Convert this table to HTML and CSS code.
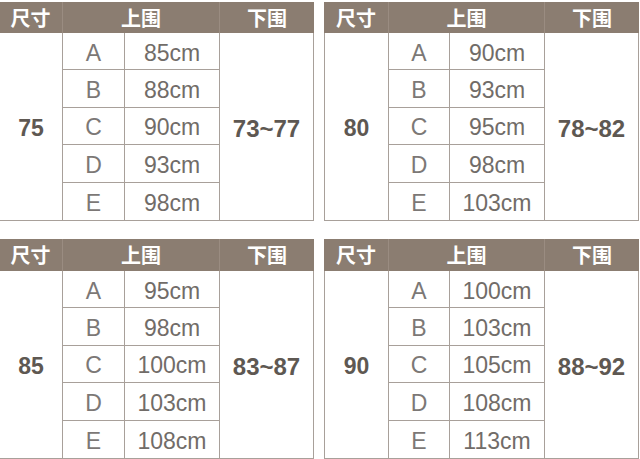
FILE: index.html
```html
<!DOCTYPE html>
<html lang="zh">
<head>
<meta charset="utf-8">
<title>尺码表</title>
<link rel="stylesheet" href="styles.css">
</head>
<body>
<div class="sheet">
  <div class="panel">
    <div class="h h1">尺寸</div><div class="h h2">上围</div><div class="h h3">下围</div>
    <div class="size">75</div>
    <div class="cup r1">A</div><div class="val r1">85cm</div>
    <div class="cup r2">B</div><div class="val r2">88cm</div>
    <div class="cup r3">C</div><div class="val r3">90cm</div>
    <div class="cup r4">D</div><div class="val r4">93cm</div>
    <div class="cup r5 last">E</div><div class="val r5 last">98cm</div>
    <div class="range">73~77</div>
  </div>
  <div class="panel alt">
    <div class="h h1">尺寸</div><div class="h h2">上围</div><div class="h h3">下围</div>
    <div class="size">80</div>
    <div class="cup r1">A</div><div class="val r1">90cm</div>
    <div class="cup r2">B</div><div class="val r2">93cm</div>
    <div class="cup r3">C</div><div class="val r3">95cm</div>
    <div class="cup r4">D</div><div class="val r4">98cm</div>
    <div class="cup r5 last">E</div><div class="val r5 last">103cm</div>
    <div class="range">78~82</div>
  </div>
  <div class="panel">
    <div class="h h1">尺寸</div><div class="h h2">上围</div><div class="h h3">下围</div>
    <div class="size">85</div>
    <div class="cup r1">A</div><div class="val r1">95cm</div>
    <div class="cup r2">B</div><div class="val r2">98cm</div>
    <div class="cup r3">C</div><div class="val r3">100cm</div>
    <div class="cup r4">D</div><div class="val r4">103cm</div>
    <div class="cup r5 last">E</div><div class="val r5 last">108cm</div>
    <div class="range">83~87</div>
  </div>
  <div class="panel alt">
    <div class="h h1">尺寸</div><div class="h h2">上围</div><div class="h h3">下围</div>
    <div class="size">90</div>
    <div class="cup r1">A</div><div class="val r1">100cm</div>
    <div class="cup r2">B</div><div class="val r2">103cm</div>
    <div class="cup r3">C</div><div class="val r3">105cm</div>
    <div class="cup r4">D</div><div class="val r4">108cm</div>
    <div class="cup r5 last">E</div><div class="val r5 last">113cm</div>
    <div class="range">88~92</div>
  </div>
</div>
</body>
</html>
```
FILE: styles.css
```css
html, body {
  margin: 0;
  padding: 0;
  background: #ffffff;
}
body {
  width: 640px;
  height: 459px;
  overflow: hidden;
  font-family: "Liberation Sans", Arial, "Noto Sans CJK SC", sans-serif;
}
.sheet {
  display: grid;
  grid-template-columns: 315px 315px;
  grid-template-rows: 219px 220px;
  column-gap: 10px;
  row-gap: 18px;
  padding-top: 2px;
  margin-left: -1px;
}
.panel {
  display: grid;
  grid-template-columns: 63px 62px 95px 1fr;
  grid-template-rows: 31px repeat(5, 1fr);
  border: 1px solid #a8a09a;
  border-top: none;
  background: #fff;
}
.panel.alt {
  grid-template-columns: 64px 61px 95px 1fr;
}
.panel:nth-child(n+3) {
  grid-template-rows: 32px repeat(5, 1fr);
}
.h {
  background: #8b7d71;
  color: #ffffff;
  font-family: "Noto Sans CJK SC", sans-serif;
  font-weight: 700;
  font-size: 20px;
  display: flex;
  align-items: center;
  justify-content: center;
  line-height: 1;
  margin: 0 -1px;
}
.h1 { grid-column: 1; border-right: 1px solid #9a8c81; margin-right: 0; }
.h2 { grid-column: 2 / span 2; border-right: 1px solid #9a8c81; margin: 0; }
.h3 { grid-column: 4; margin-left: 0; }
.size, .range {
  grid-row: 2 / span 5;
  display: flex;
  align-items: center;
  justify-content: center;
  font-weight: 700;
  color: #5e5852;
  padding-top: 4px;
}
.size {
  grid-column: 1;
  font-size: 23px;
  border-right: 1px solid #a8a09a;
}
.range {
  grid-column: 4;
  font-size: 24px;
}
.cup, .val {
  display: flex;
  align-items: center;
  justify-content: center;
  border-right: 1px solid #a8a09a;
  border-bottom: 1px solid #a8a09a;
  padding-top: 4px;
}
.cup {
  grid-column: 2;
  font-size: 23px;
  color: #7c7876;
}
.val {
  grid-column: 3;
  font-size: 23px;
  color: #716c68;
}
.cup.last, .val.last { border-bottom: none; }
.r1 { grid-row: 2; }
.r2 { grid-row: 3; }
.r3 { grid-row: 4; }
.r4 { grid-row: 5; }
.r5 { grid-row: 6; }
```
